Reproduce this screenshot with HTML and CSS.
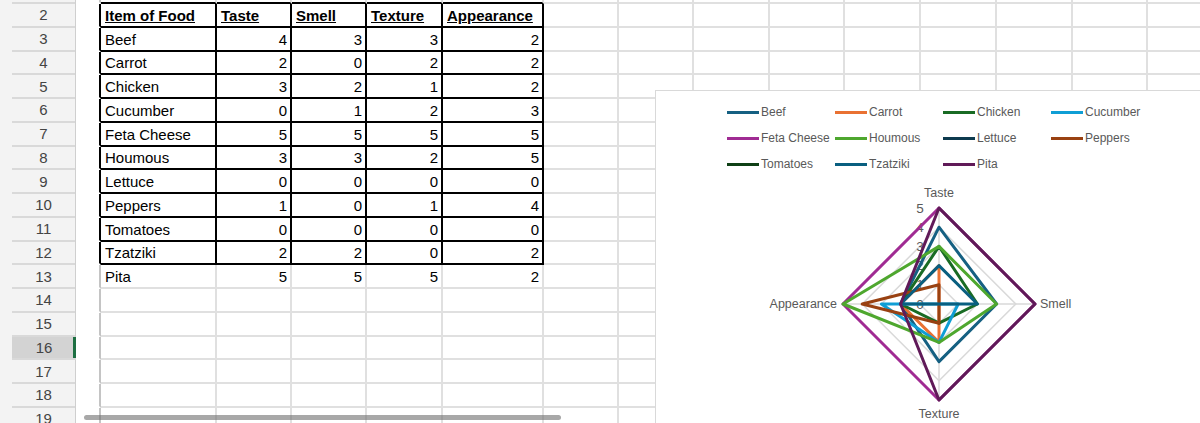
FILE: index.html
```html
<!DOCTYPE html>
<html lang="en">
<head>
<meta charset="utf-8">
<title>Food ratings</title>
<link rel="stylesheet" href="styles.css">
</head>
<body>
<div class="app">
  <div class="rowhead">
    <div class="rh first"></div>
    <div class="rh">2</div>
    <div class="rh">3</div>
    <div class="rh">4</div>
    <div class="rh">5</div>
    <div class="rh">6</div>
    <div class="rh">7</div>
    <div class="rh">8</div>
    <div class="rh">9</div>
    <div class="rh">10</div>
    <div class="rh">11</div>
    <div class="rh">12</div>
    <div class="rh">13</div>
    <div class="rh">14</div>
    <div class="rh">15</div>
    <div class="rh sel">16</div>
    <div class="rh">17</div>
    <div class="rh">18</div>
    <div class="rh">19</div>
  </div>
  <div class="sheet">
    <div class="a"></div><div class="t"></div><div class="t"></div><div class="t"></div><div class="t"></div><div class="t"></div><div></div><div></div><div></div><div></div><div></div><div></div><div></div><div></div><div></div>
    <div class="a ak"></div><div class="k h">Item of Food</div><div class="k h">Taste</div><div class="k h">Smell</div><div class="k h">Texture</div><div class="k h">Appearance</div><div></div><div></div><div></div><div></div><div></div><div></div><div></div><div></div><div></div>
    <div class="a ak"></div><div class="k">Beef</div><div class="k n">4</div><div class="k n">3</div><div class="k n">3</div><div class="k n">2</div><div></div><div></div><div></div><div></div><div></div><div></div><div></div><div></div><div></div>
    <div class="a ak"></div><div class="k">Carrot</div><div class="k n">2</div><div class="k n">0</div><div class="k n">2</div><div class="k n">2</div><div></div><div></div><div></div><div></div><div></div><div></div><div></div><div></div><div></div>
    <div class="a ak"></div><div class="k">Chicken</div><div class="k n">3</div><div class="k n">2</div><div class="k n">1</div><div class="k n">2</div><div></div><div></div><div></div><div></div><div></div><div></div><div></div><div></div><div></div>
    <div class="a ak"></div><div class="k">Cucumber</div><div class="k n">0</div><div class="k n">1</div><div class="k n">2</div><div class="k n">3</div><div></div><div></div><div></div><div></div><div></div><div></div><div></div><div></div><div></div>
    <div class="a ak"></div><div class="k">Feta Cheese</div><div class="k n">5</div><div class="k n">5</div><div class="k n">5</div><div class="k n">5</div><div></div><div></div><div></div><div></div><div></div><div></div><div></div><div></div><div></div>
    <div class="a ak"></div><div class="k">Houmous</div><div class="k n">3</div><div class="k n">3</div><div class="k n">2</div><div class="k n">5</div><div></div><div></div><div></div><div></div><div></div><div></div><div></div><div></div><div></div>
    <div class="a ak"></div><div class="k">Lettuce</div><div class="k n">0</div><div class="k n">0</div><div class="k n">0</div><div class="k n">0</div><div></div><div></div><div></div><div></div><div></div><div></div><div></div><div></div><div></div>
    <div class="a ak"></div><div class="k">Peppers</div><div class="k n">1</div><div class="k n">0</div><div class="k n">1</div><div class="k n">4</div><div></div><div></div><div></div><div></div><div></div><div></div><div></div><div></div><div></div>
    <div class="a ak"></div><div class="k">Tomatoes</div><div class="k n">0</div><div class="k n">0</div><div class="k n">0</div><div class="k n">0</div><div></div><div></div><div></div><div></div><div></div><div></div><div></div><div></div><div></div>
    <div class="a ak"></div><div class="k">Tzatziki</div><div class="k n">2</div><div class="k n">2</div><div class="k n">0</div><div class="k n">2</div><div></div><div></div><div></div><div></div><div></div><div></div><div></div><div></div><div></div>
    <div class="a"></div><div>Pita</div><div class="n">5</div><div class="n">5</div><div class="n">5</div><div class="n">2</div><div></div><div></div><div></div><div></div><div></div><div></div><div></div><div></div><div></div>
    <div class="a"></div><div></div><div></div><div></div><div></div><div></div><div></div><div></div><div></div><div></div><div></div><div></div><div></div><div></div><div></div>
    <div class="a"></div><div></div><div></div><div></div><div></div><div></div><div></div><div></div><div></div><div></div><div></div><div></div><div></div><div></div><div></div>
    <div class="a"></div><div></div><div></div><div></div><div></div><div></div><div></div><div></div><div></div><div></div><div></div><div></div><div></div><div></div><div></div>
    <div class="a"></div><div></div><div></div><div></div><div></div><div></div><div></div><div></div><div></div><div></div><div></div><div></div><div></div><div></div><div></div>
    <div class="a"></div><div></div><div></div><div></div><div></div><div></div><div></div><div></div><div></div><div></div><div></div><div></div><div></div><div></div><div></div>
    <div class="a"></div><div></div><div></div><div></div><div></div><div></div><div></div><div></div><div></div><div></div><div></div><div></div><div></div><div></div><div></div>
  </div>

  <div class="chart">
    <div class="legend">
      <div class="li"><i class="s1"></i>Beef</div>
      <div class="li"><i class="s2"></i>Carrot</div>
      <div class="li"><i class="s3"></i>Chicken</div>
      <div class="li"><i class="s4"></i>Cucumber</div>
      <div class="li"><i class="s5"></i>Feta Cheese</div>
      <div class="li"><i class="s6"></i>Houmous</div>
      <div class="li"><i class="s7"></i>Lettuce</div>
      <div class="li"><i class="s8"></i>Peppers</div>
      <div class="li"><i class="s9"></i>Tomatoes</div>
      <div class="li"><i class="s10"></i>Tzatziki</div>
      <div class="li"><i class="s11"></i>Pita</div>
    </div>
    <svg class="plot" width="544" height="254" viewBox="0 0 544 254">
      <g class="grid">
        <polygon points="283,107.8 302.2,127 283,146.2 263.8,127"/>
        <polygon points="283,88.6 321.4,127 283,165.4 244.6,127"/>
        <polygon points="283,69.4 340.6,127 283,184.6 225.4,127"/>
        <polygon points="283,50.2 359.8,127 283,203.8 206.2,127"/>
        <polygon points="283,31 379,127 283,223 187,127"/>
        <path d="M283 127V31M283 127H379M283 127V223M283 127H187"/>
      </g>
      <g class="ticks">
        <text x="264" y="31">5</text>
        <text x="264" y="50.2">4</text>
        <text x="264" y="69.4">3</text>
        <text x="264" y="88.6">2</text>
        <text x="264" y="107.8">1</text>
        <text x="264" y="127">0</text>
      </g>
      <g class="cats">
        <text x="283" y="16" text-anchor="middle">Taste</text>
        <text x="384" y="127" text-anchor="start">Smell</text>
        <text x="283" y="237" text-anchor="middle">Texture</text>
        <text x="181" y="127" text-anchor="end">Appearance</text>
      </g>
      <g class="series">
        <polygon class="p1" points="283,50.2 340.6,127 283,184.6 244.6,127"/>
        <polygon class="p2" points="283,88.6 283,127 283,165.4 244.6,127"/>
        <polygon class="p3" points="283,69.4 321.4,127 283,146.2 244.6,127"/>
        <polygon class="p4" points="283,127 302.2,127 283,165.4 225.4,127"/>
        <polygon class="p5" points="283,31 379,127 283,223 187,127"/>
        <polygon class="p6" points="283,69.4 340.6,127 283,165.4 187,127"/>
        <polygon class="p7" points="283,127 283,127 283,127 283,127"/>
        <polygon class="p8" points="283,107.8 283,127 283,146.2 206.2,127"/>
        <polygon class="p9" points="283,127 283,127 283,127 283,127"/>
        <polygon class="p10" points="283,88.6 321.4,127 283,127 244.6,127"/>
        <polygon class="p11" points="283,31 379,127 283,223 244.6,127"/>
      </g>
    </svg>
  </div>

  <div class="hscroll"></div>
</div>
</body>
</html>
```

FILE: styles.css
```css
* {
  box-sizing: border-box;
}

html,
body {
  margin: 0;
  padding: 0;
}

body {
  width: 1200px;
  height: 423px;
  overflow: hidden;
  background: #ffffff;
  font-family: "Liberation Sans", Arial, sans-serif;
  color: #000000;
}

.app {
  position: relative;
  display: flex;
  width: 1200px;
  height: 423px;
  overflow: hidden;
}

/* Row headers */
.rowhead {
  flex: 0 0 76px;
  display: flex;
  flex-direction: column;
  background: #f3f3f3;
  border-right: 1px solid #cfcfcf;
}

.rh {
  flex: 0 0 23.75px;
  height: 23.75px;
  margin-left: 12px;
  display: flex;
  align-items: center;
  justify-content: center;
  border-bottom: 2px solid #d9d9d9;
  font-size: 15px;
  color: #444444;
}

.rh.first {
  flex-basis: 4px;
  height: 4px;
}

.rh.sel {
  margin-right: -1px;
  background: #d3d3d3;
  box-shadow: inset -3px 0 0 #1d6f42;
}

/* Cells */
.sheet {
  flex: 0 0 auto;
  display: grid;
  grid-template-columns: 25px 116px 75px 75px 76px 101px 75px 75px 76px 75px 76px 76px 76px 75px 76px;
  grid-template-rows: 4px;
  grid-auto-rows: 23.75px;
}

.sheet > div {
  display: flex;
  align-items: center;
  padding: 1px 4px 0;
  border-right: 2px solid #e0e0e0;
  border-bottom: 2px solid #e0e0e0;
  font-size: 15px;
  white-space: nowrap;
  overflow: hidden;
}

.sheet > .a {
  border-bottom-color: transparent;
  border-right-color: #c4c4c4;
}

.sheet > .ak {
  border-right-color: #000000;
}

.sheet > .t {
  border-bottom-color: #000000;
}

.sheet > .k {
  border-color: #000000;
}

.sheet > .n {
  justify-content: flex-end;
  padding-right: 3px;
}

.sheet > .h {
  font-weight: bold;
  text-decoration: underline;
}

/* Chart */
.chart {
  position: absolute;
  left: 655px;
  top: 90px;
  width: 560px;
  height: 345px;
  background: #ffffff;
  border: 1px solid #d9d9d9;
}

.legend {
  display: grid;
  grid-template-columns: repeat(4, 108px);
  grid-auto-rows: 26px;
  padding: 8px 0 0 71px;
}

.li {
  display: flex;
  align-items: center;
  font-size: 12px;
  color: #595959;
  white-space: nowrap;
}

.li i {
  flex: 0 0 32px;
  height: 3px;
  margin-right: 2px;
}

.plot {
  display: block;
}

.grid polygon,
.grid path {
  fill: none;
  stroke: #d9d9d9;
  stroke-width: 1.5;
}

.ticks text {
  font-family: "Liberation Sans", Arial, sans-serif;
  font-size: 13.5px;
  fill: #595959;
  text-anchor: middle;
  dominant-baseline: central;
}

.cats text {
  font-family: "Liberation Sans", Arial, sans-serif;
  font-size: 12.5px;
  fill: #595959;
  dominant-baseline: central;
}

.series polygon {
  fill: none;
  stroke-width: 3;
  stroke-linejoin: round;
}

.s1 { background: #156082; }
.s2 { background: #e97132; }
.s3 { background: #196b24; }
.s4 { background: #0f9ed5; }
.s5 { background: #a02b93; }
.s6 { background: #4ea72e; }
.s7 { background: #0d3a4e; }
.s8 { background: #994111; }
.s9 { background: #0f4016; }
.s10 { background: #095f80; }
.s11 { background: #601a58; }

.p1 { stroke: #156082; }
.p2 { stroke: #e97132; }
.p3 { stroke: #196b24; }
.p4 { stroke: #0f9ed5; }
.p5 { stroke: #a02b93; }
.p6 { stroke: #4ea72e; }
.p7 { stroke: #0d3a4e; }
.p8 { stroke: #994111; }
.p9 { stroke: #0f4016; }
.p10 { stroke: #095f80; }
.p11 { stroke: #601a58; }

/* Horizontal scrollbar overlay */
.hscroll {
  position: absolute;
  left: 84px;
  top: 415px;
  width: 477px;
  height: 5px;
  border-radius: 3px;
  background: rgba(110, 110, 110, 0.6);
}
```
